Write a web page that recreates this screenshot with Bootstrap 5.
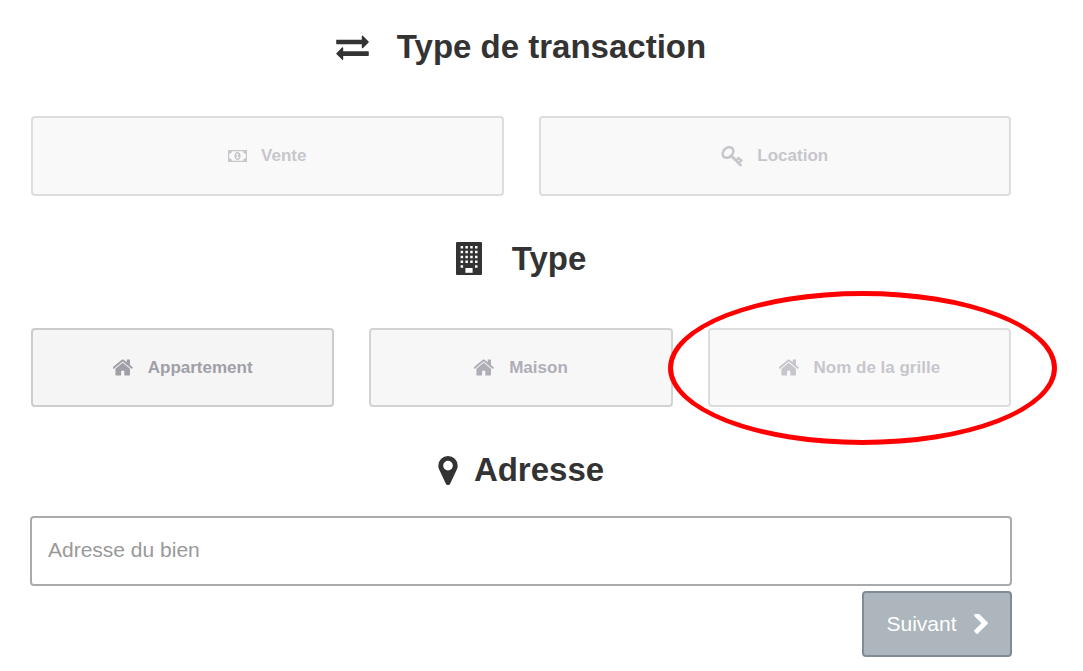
<!DOCTYPE html>
<html lang="fr">
<head>
<meta charset="utf-8">
<meta name="viewport" content="width=device-width, initial-scale=1">
<title>Type de transaction</title>
<link href="https://cdn.jsdelivr.net/npm/bootstrap@5.3.0/dist/css/bootstrap.min.css" rel="stylesheet">
<style>
body { font-family: "Liberation Sans", Arial, sans-serif; color: #333; background: #fff; }
.form-page { padding: 27px 71px 14px 30px; }
.step-title { font-size: 33px; line-height: 40px; font-weight: 700; margin-bottom: 49px; }
.step-title svg { margin-right: 28px; }
.step-title.near { margin-bottom: 26px; }
.step-title.near svg { margin-right: 16px; }
.choices { gap: 35px; margin-bottom: 43px; padding: 0 1px; }
.choice-cell { flex: 1 1 0; min-width: 0; }
.choice { height: 80px; border: 2px solid #ddd; border-radius: 4px; background: #f9f9f9; color: #c7c6cc; font-size: 17px; line-height: 24px; font-weight: 700; }
.choice svg { margin-right: 14px; }
.choice.type { height: 79px; }
.choice.strong { color: #a09fa8; background: #f5f5f5; border-color: #ccc; }
.choice.medium { color: #afaeb6; background: #f7f7f7; border-color: #d3d3d3; }
.choice:hover { color: #8b8a94; background: #f5f5f5; border-color: #ccc; }
.highlight { position: absolute; inset: -37px -46px -38px -40px; border: 5px solid #f00; border-radius: 50%; pointer-events: none; z-index: 2; }
.address { height: 70px; border: 2px solid #aaa; border-radius: 4px; padding: 0 16px 3px; font-size: 21px; color: #555; }
.address::placeholder { color: #999; }
.next { width: 150px; height: 66px; margin-top: 5px; border: 2px solid #7f8c93; border-radius: 4px; background: #acb6bc; color: #fff; font-size: 21px; }
.next svg { margin-left: 17px; }
</style>
</head>
<body>
<svg class="d-none" aria-hidden="true">
  <symbol id="home" viewBox="64 253 1664 1283"><path d="M1408 992v480q0 26-19 45t-45 19h-384v-384h-256v384h-384q-26 0-45-19t-19-45v-480q0-1 .5-3t.5-3l575-474 575 474q1 2 1 6zm223-69l-62 74q-8 9-21 11h-3q-13 0-21-7l-692-577-692 577q-12 8-24 7-13-2-21-11l-62-74q-8-10-7-23.500t11-21.500l719-599q32-26 76-26t76 26l244 204v-195q0-14 9-23t23-9h192q14 0 23 9t9 23v408l219 182q10 8 11 21.500t-7 23.500z"/></symbol>
</svg>
<main class="form-page">
  <form>
    <h2 class="step-title d-flex justify-content-center align-items-center">
      <svg width="33" height="25" viewBox="0 256 1792 1376" fill="currentColor" aria-hidden="true"><path d="M1792 1184v192q0 13-9.500 22.500t-22.500 9.500h-1376v192q0 13-9.500 22.500t-22.500 9.500q-12 0-24-10l-319-320q-9-9-9-22 0-14 9-23l320-320q9-9 23-9 13 0 22.500 9.500t9.500 22.500v192h1376q13 0 22.500 9.500t9.500 22.500zm0-544q0 14-9 23l-320 320q-9 9-23 9-13 0-22.500-9.500t-9.500-22.500v-192h-1376q-13 0-22.500-9.500t-9.500-22.500v-192q0-13 9.500-22.500t22.500-9.500h1376v-192q0-14 9-23t23-9q12 0 24 10l319 319q9 9 9 23z"/></svg>
      <span>Type de transaction</span>
    </h2>
    <div class="choices d-flex">
      <div class="choice-cell"><button type="button" class="choice btn w-100 d-flex justify-content-center align-items-center">
        <svg width="19" height="12" viewBox="0 0 19 12" fill="currentColor" aria-hidden="true"><path fill-rule="evenodd" d="M0 0h19v12H0zM4 1.200A3 3 0 0 1 1.200 4v4A3 3 0 0 1 4 10.800h11A3 3 0 0 1 17.800 8V4A3 3 0 0 1 15 1.200z"/><path fill-rule="evenodd" d="M9.500 2c2 0 3.100 1.800 3.100 4s-1.100 4-3.100 4-3.100-1.800-3.100-4 1.100-4 3.100-4zm-.4 1.400L7.800 4.600l.5.600.7-.5v2.600H8v1h3v-1h-1V3.400z"/></svg>
        Vente</button></div>
      <div class="choice-cell"><button type="button" class="choice btn w-100 d-flex justify-content-center align-items-center">
        <svg width="22" height="21" viewBox="0 0 22 21" fill="none" stroke="currentColor" stroke-linecap="round" aria-hidden="true"><ellipse cx="7" cy="6.500" rx="6" ry="4.600" stroke-width="2.500" transform="rotate(-45 7 6.500)"/><path stroke-width="2.800" d="M10.500 10l9 9"/><path stroke-width="2.200" d="M15.500 14l2-2M18 16.500l2.500-2.200M17.300 11.800l3.300 2.800"/></svg>
        Location</button></div>
    </div>

    <h2 class="step-title d-flex justify-content-center align-items-center">
      <svg width="28" height="34" viewBox="0 0 28 34" aria-hidden="true"><rect width="26" height="33" rx="1" fill="#333"/><g stroke="#fff" stroke-width="2.500" stroke-dasharray="2.500 2.300"><path d="M4.600 5.300h17M4.600 10.100h17M4.600 14.900h17M4.600 19.700h17"/><path d="M4.600 24.500h2.500M19 24.500h2.500"/></g><path fill="#fff" d="M9.400 26h7.200v4.800H9.400z"/></svg>
      <span>Type</span>
    </h2>
    <div class="choices d-flex">
      <div class="choice-cell"><button type="button" class="choice type strong btn w-100 d-flex justify-content-center align-items-center">
        <svg width="21" height="17" fill="currentColor" aria-hidden="true"><use href="#home"/></svg>
        Appartement</button></div>
      <div class="choice-cell"><button type="button" class="choice type medium btn w-100 d-flex justify-content-center align-items-center">
        <svg width="21" height="17" fill="currentColor" aria-hidden="true"><use href="#home"/></svg>
        Maison</button></div>
      <div class="choice-cell position-relative"><button type="button" class="choice type btn w-100 d-flex justify-content-center align-items-center">
        <svg width="21" height="17" fill="currentColor" aria-hidden="true"><use href="#home"/></svg>
        Nom de la grille</button>
        <span class="highlight"></span></div>
    </div>

    <h2 class="step-title near d-flex justify-content-center align-items-center">
      <svg width="20" height="29" viewBox="384 128 1024 1536" fill="currentColor" aria-hidden="true"><path d="M1152 640q0-106-75-181t-181-75-181 75-75 181 75 181 181 75 181-75 75-181zm256 0q0 109-33 179l-364 774q-16 33-47.500 52t-67.500 19-67.500-19-46.500-52l-365-774q-33-70-33-179 0-212 150-362t362-150 362 150 150 362z"/></svg>
      <label for="address">Adresse</label>
    </h2>
    <input type="text" id="address" class="address form-control" placeholder="Adresse du bien">
    <div class="d-flex justify-content-end">
      <button type="submit" class="next btn d-flex justify-content-center align-items-center">Suivant
        <svg width="14" height="20" viewBox="346 154 1036 1484" fill="currentColor" aria-hidden="true"><path d="M1363 877l-742 742q-19 19-45 19t-45-19l-166-166q-19-19-19-45t19-45l531-531-531-531q-19-19-19-45t19-45l166-166q19-19 45-19t45 19l742 742q19 19 19 45t-19 45z"/></svg></button>
    </div>
  </form>
</main>
<script src="https://cdn.jsdelivr.net/npm/bootstrap@5.3.0/dist/js/bootstrap.bundle.min.js"></script>
</body>
</html>
